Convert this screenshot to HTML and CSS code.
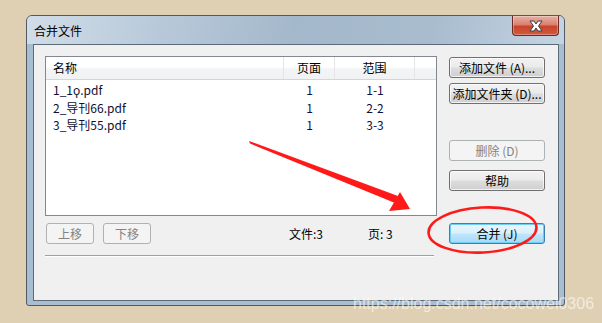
FILE: index.html
```html
<!DOCTYPE html>
<html lang="zh-CN">
<head>
<meta charset="utf-8">
<title>合并文件</title>
<link rel="stylesheet" href="styles.css">
</head>
<body>
<div class="window">
  <div class="titlebar">
    <span class="title">合并文件</span>
    <div class="close">
      <svg width="20" height="14" viewBox="0 0 20 14"><path d="M4 2 L8 2 L10 5 L12 2 L16 2 L12.5 7 L16 12 L12 12 L10 9 L8 12 L4 12 L7.5 7 Z" fill="#fff" stroke="#3d3d45" stroke-width="1" stroke-linejoin="round"/></svg>
    </div>
  </div>
  <div class="client">
    <div class="layout">
      <div class="list">
        <div class="lv-head">
          <div class="hc name">名称</div>
          <div class="hc center">页面</div>
          <div class="hc center">范围</div>
          <div class="hc"></div>
        </div>
        <div class="lv-row"><span class="c-name">1_1ϙ.pdf</span><span class="c-num">1</span><span class="c-num">1-1</span></div>
        <div class="lv-row"><span class="c-name">2_导刊66.pdf</span><span class="c-num">1</span><span class="c-num">2-2</span></div>
        <div class="lv-row"><span class="c-name">3_导刊55.pdf</span><span class="c-num">1</span><span class="c-num">3-3</span></div>
      </div>
      <div class="side">
        <button class="btn b-add">添加文件 (A)...</button>
        <button class="btn b-folder">添加文件夹 (D)...</button>
        <button class="btn disabled b-del">删除 (D)</button>
        <button class="btn b-help">帮助</button>
      </div>
      <div class="bottom">
        <div class="moves">
          <button class="btn disabled small">上移</button>
          <button class="btn disabled small">下移</button>
        </div>
        <span class="stat files">文件:3</span>
        <span class="stat pages">页: 3</span>
      </div>
      <button class="btn default b-merge">合并 (J)</button>
      <div class="sep"></div>
    </div>
  </div>
</div>
<svg class="annot" width="602" height="323" viewBox="0 0 602 323">
  <polygon points="249,141 398,196 395,203 250,143.5" fill="#ff1a1a"/>
  <polygon points="400,192 410,209 389,211" fill="#ff1a1a"/>
  <ellipse cx="482.5" cy="230" rx="54" ry="22.5" transform="rotate(-3 482.5 230)" fill="none" stroke="#ff1a1a" stroke-width="2.6"/>
</svg>
<div class="watermark">https://blog.csdn.net/cocowei0306</div>
</body>
</html>
```
FILE: styles.css
```css
* { box-sizing: border-box; }
html, body { margin: 0; }
body {
  width: 602px;
  height: 323px;
  background: #dfcfb3;
  padding: 15px 0 0 26px;
  position: relative;
  overflow: hidden;
  font-family: "Noto Sans CJK SC", "Noto Sans", sans-serif;
  font-size: 12px;
  color: #000;
}
.window {
  width: 539px;
  height: 291px;
  border: 1px solid #4f5a66;
  border-radius: 6px 6px 3px 3px;
  background: #a9bdd1;
  padding: 0 5px 4px 6px;
  display: flex;
  flex-direction: column;
}
.titlebar {
  height: 28px;
  margin: 0 -5px 0 -6px;
  padding: 0 5px 0 7px;
  border-radius: 5px 5px 0 0;
  background: linear-gradient(100deg, #d1dde8 0%, #b7c9d9 25%, #a4b8cb 50%, #a8bcce 75%, #c4d4e2 100%);
  display: flex;
  align-items: flex-start;
  justify-content: space-between;
}
.title {
  margin-top: 6px;
  line-height: 17px;
  font-size: 12px;
  color: #000;
}
.close {
  width: 47px;
  height: 20px;
  border: 1px solid #6b2b24;
  border-top: none;
  border-radius: 0 0 4px 4px;
  background: linear-gradient(#e8b1a6 0%, #d9806f 45%, #c8442d 55%, #cf5a3f 100%);
  display: flex;
  align-items: center;
  justify-content: center;
  box-shadow: inset 0 0 0 1px rgba(255,255,255,0.3);
}
.close svg { display: block; }
.client {
  flex: 1;
  border: 1px solid #5d6b78;
  background: #f0f0f0;
  padding: 11px 0 0 11px;
}
.layout {
  display: grid;
  grid-template-columns: 392px 96px;
  grid-template-rows: 160px 21px 6px;
  column-gap: 12px;
  row-gap: 7px;
}
.list {
  grid-column: 1;
  grid-row: 1;
  border: 1px solid #828790;
  background: #fff;
}
.lv-head {
  display: grid;
  grid-template-columns: 238px 51px 80px 1fr;
  height: 23px;
  border-bottom: 1px solid #d5d5d5;
  background: linear-gradient(#ffffff 0%, #ffffff 45%, #f3f4f6 55%, #f1f2f4 100%);
}
.hc {
  border-right: 1px solid #e3e5e8;
  line-height: 22px;
  font-size: 12px;
}
.hc:last-child { border-right: none; }
.hc.name { padding-left: 7px; }
.hc.center { text-align: center; }
.lv-row {
  display: grid;
  grid-template-columns: 238px 51px 80px;
  height: 17.5px;
  line-height: 17px;
  font-size: 12px;
}
.lv-head + .lv-row { margin-top: 1px; }
.c-name { padding-left: 7px; color: #101030; }
.c-num { text-align: center; color: #101040; }
.side {
  grid-column: 2;
  grid-row: 1;
  display: flex;
  flex-direction: column;
  padding-top: 1px;
}
.btn {
  font-family: inherit;
  font-size: 12px;
  height: 21px;
  width: 96px;
  padding: 0;
  border: 1px solid #707070;
  border-radius: 3px;
  color: #000;
  background: linear-gradient(#f2f2f2 0%, #ebebeb 48%, #dddddd 52%, #cfcfcf 100%);
  box-shadow: inset 0 0 0 1px rgba(255,255,255,0.7);
  line-height: 18px;
  display: block;
}
.btn.disabled {
  border-color: #adb2b5;
  color: #838383;
  background: #f4f4f4;
  box-shadow: none;
}
.btn.default {
  border-color: #3c7fb1;
  background: linear-gradient(#eaf6fd 0%, #d9f0fc 48%, #bee6fd 52%, #a7d9f5 100%);
  box-shadow: inset 0 0 0 1px #6ecef5;
}
.b-folder { margin-top: 5px; }
.b-del { margin-top: 36px; }
.b-help { margin-top: 9px; }
.bottom {
  grid-column: 1;
  grid-row: 2;
  display: flex;
  align-items: center;
  height: 21px;
}
.moves {
  display: flex;
  gap: 9px;
  margin-left: 1px;
}
.btn.small { width: 48px; }
.stat {
  line-height: 21px;
  font-size: 12px;
}
.files { margin-left: 138px; }
.pages { margin-left: 45px; }
.b-merge {
  grid-column: 2;
  grid-row: 2;
}
.sep {
  grid-column: 1;
  grid-row: 3;
  align-self: end;
  width: 389px;
  height: 2px;
  border-top: 1px solid #a0a0a0;
  border-bottom: 1px solid #ffffff;
}
.annot {
  position: absolute;
  left: 0;
  top: 0;
  pointer-events: none;
}
.watermark {
  position: absolute;
  left: 353px;
  top: 294px;
  font-family: "Liberation Sans", Arial, sans-serif;
  font-size: 16px;
  line-height: 19px;
  color: rgba(255,255,255,0.6);
}
```
